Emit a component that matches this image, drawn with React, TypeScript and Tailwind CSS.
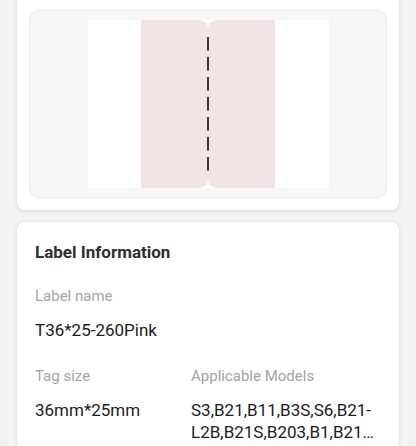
import React from "react";

const models = "S3,B21,B11,B3S,S6,B21-L2B,B21S,B203,B1,B21…";

function LabelPreview() {
  return (
    <div className="flex h-[188px] items-center justify-center rounded-[10px] border border-[#ececec] bg-[#f7f7f7]">
      <div className="flex h-[168px] w-[241px] justify-center bg-white">
        <div className="relative flex h-full">
          <div className="h-full w-[67px] rounded-r-[9px] bg-[#f2e4e4]" />
          <div className="h-full w-[67px] rounded-l-[9px] bg-[#f2e4e4]" />
          {/* cut line */}
          <svg
            className="absolute left-[66px] top-0"
            width="2"
            height="168"
            viewBox="0 0 2 168"
          >
            <line
              x1="1"
              y1="17"
              x2="1"
              y2="152"
              stroke="#3a3536"
              strokeWidth="2"
              strokeDasharray="13.5 6.5"
            />
          </svg>
        </div>
      </div>
    </div>
  );
}

function Field({ label, value, className }: { label: string; value: string; className?: string }) {
  return (
    <div className={className}>
      <div className="text-[15px] leading-[20px] text-[#a3a3a3]">{label}</div>
      <div className="mt-[13px] text-[17px] leading-[22px] text-[#1c1c1c]">{value}</div>
    </div>
  );
}

export default function App() {
  return (
    <div
      className="min-h-screen overflow-hidden bg-[#f3f3f3] px-[17px]"
      style={{ fontFamily: "Roboto, 'Noto Sans', sans-serif" }}
    >
      <div className="-mt-[20px] rounded-[8px] bg-white px-[12px] pb-[12px] pt-[30px] shadow-[0_1px_4px_rgba(0,0,0,0.12)]">
        <LabelPreview />
      </div>

      <div className="mt-[12px] rounded-[8px] bg-white px-[18px] pb-[20px] pt-[19px] shadow-[0_1px_4px_rgba(0,0,0,0.12)]">
        <h2 className="text-[17px] font-bold leading-[22px] text-[#2e2e2e]">Label Information</h2>
        <Field className="mt-[23px]" label="Label name" value="T36*25-260Pink" />
        <div className="mt-[25px] flex">
          <Field className="w-[156px] shrink-0" label="Tag size" value="36mm*25mm" />
          <Field className="w-[188px]" label="Applicable Models" value={models} />
        </div>
      </div>
    </div>
  );
}
